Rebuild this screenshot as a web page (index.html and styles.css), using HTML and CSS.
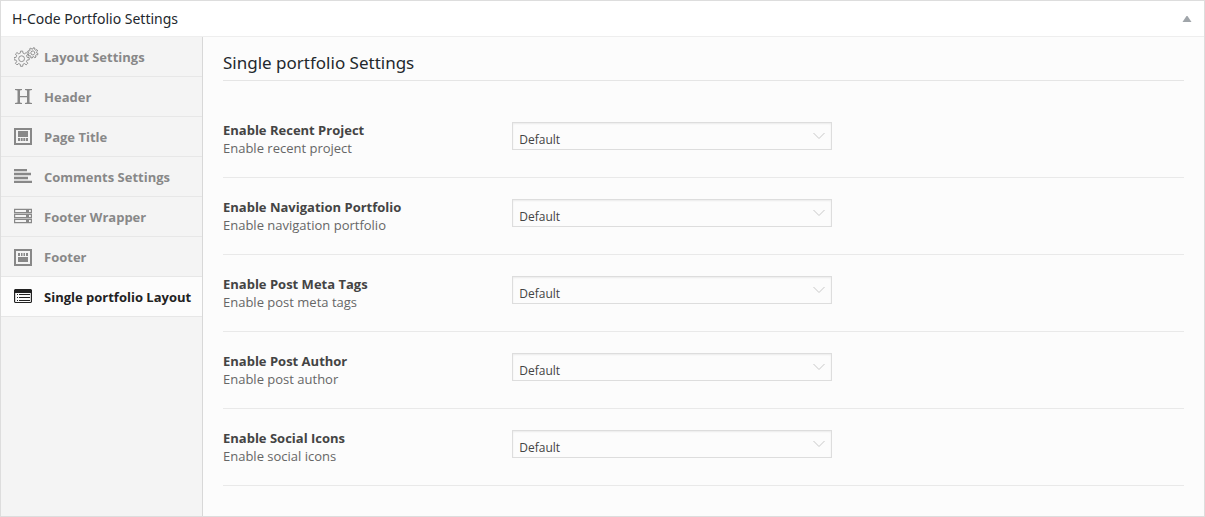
FILE: index.html
```html
<!DOCTYPE html>
<html lang="en">
<head>
<meta charset="utf-8">
<title>H-Code Portfolio Settings</title>
<link rel="stylesheet" href="styles.css">
</head>
<body>
<section class="metabox">
  <header class="metabox-header">
    <h2 class="metabox-title">H-Code Portfolio Settings</h2>
    <button class="toggle" type="button" aria-label="Toggle panel"><svg width="10" height="6" viewBox="0 0 10 6"><path d="M4.500 0H5.500L9.500 6H.5Z" fill="currentColor"/></svg></button>
  </header>
  <div class="metabox-body">
    <nav class="tabs">
      <a class="tab" href="#layout"><svg class="icon" viewBox="0 0 25 20" fill="none" stroke="currentColor">
        <defs>
          <path id="tooth" d="M5.200-2.150L5.500-1.400L7.600-1.100V1.100L5.500 1.400L5.200 2.150"/>
          <g id="gear"><use href="#tooth"/><use href="#tooth" transform="rotate(45)"/><use href="#tooth" transform="rotate(90)"/><use href="#tooth" transform="rotate(135)"/><use href="#tooth" transform="rotate(180)"/><use href="#tooth" transform="rotate(225)"/><use href="#tooth" transform="rotate(270)"/><use href="#tooth" transform="rotate(315)"/><circle r="2.900"/></g>
        </defs>
        <use href="#gear" transform="translate(7.600 11.700)" stroke-width=".9"/>
        <use href="#gear" transform="translate(18.800 5.900) rotate(15) scale(.68)" stroke-width="1.300"/></svg><span>Layout Settings</span></a>
      <a class="tab" href="#header"><svg class="icon" viewBox="0 0 25 20" fill="currentColor"><path d="M1 2H8V3L6 3.500V9H13V3.500L11 3V2H18V3L15.500 3.500V15.500L18 16V17H11V16L13 15.500V10.200H6V15.500L8 16V17H1V16L3.500 15.500V3.500L1 3Z"/></svg><span>Header</span></a>
      <a class="tab" href="#page-title"><svg class="icon" viewBox="0 0 25 20" fill="currentColor"><path fill-rule="evenodd" d="M0 1H18V18H0ZM2 3V16H16V3Z"/><path d="M4 4H14V10H4ZM4 11H6V14H4ZM6.700 11H8.700V14H6.700ZM9.300 11H11.300V14H9.300ZM12 11H14V14H12Z"/></svg><span>Page Title</span></a>
      <a class="tab" href="#comments"><svg class="icon" viewBox="0 0 25 20" fill="currentColor"><path d="M0 2H13V4.300H0ZM0 5.800H17V8.200H0ZM0 9.800H14V12.200H0ZM0 13.700H18V16H0Z"/></svg><span>Comments Settings</span></a>
      <a class="tab" href="#footer-wrapper"><svg class="icon" viewBox="0 0 25 20" fill="currentColor"><path fill-rule="evenodd" d="M0 1.800H18V6.200H0ZM1.200 3V5H12V3ZM15 3V5H16.800V3ZM0 6.800H18V11.200H0ZM1.200 8V10H12V8ZM15 8V10H16.800V8ZM0 11.800H18V16.200H0ZM1.200 13V15H12V13ZM15 13V15H16.800V13Z"/></svg><span>Footer Wrapper</span></a>
      <a class="tab" href="#footer"><svg class="icon" viewBox="0 0 25 20" fill="currentColor"><path fill-rule="evenodd" d="M0 2H18V19H0ZM2 4V17H16V4Z"/><path d="M4 6H6V9H4ZM7 6H8.500V9H7ZM9.500 6H11V9H9.500ZM12 6H14V9H12ZM4 10H14V15H4Z"/></svg><span>Footer</span></a>
      <a class="tab tab-active" href="#single" aria-current="page"><svg class="icon" viewBox="0 0 25 20" fill="currentColor"><path fill-rule="evenodd" d="M1 2H17L18 3V15L17 16H1L0 15V3ZM1.200 6V15H16.800V6Z"/><path d="M3 7H4V8H3ZM5 7H16V8H5ZM3 10H4V11H3ZM5 10H16V11H5ZM3 13H4V14H3ZM5 13H16V14H5Z"/></svg><span>Single portfolio Layout</span></a>
    </nav>
    <form class="panel">
      <h3 class="panel-title">Single portfolio Settings</h3>
      <div class="field">
        <label class="field-label" for="recent"><strong>Enable Recent Project</strong><span>Enable recent project</span></label>
        <div class="select-wrap"><select id="recent"><option>Default</option></select><svg class="chevron" viewBox="0 0 12 8"><path d="M.5 1L6 6.500L11.500 1"/></svg></div>
      </div>
      <div class="field">
        <label class="field-label" for="navigation"><strong>Enable Navigation Portfolio</strong><span>Enable navigation portfolio</span></label>
        <div class="select-wrap"><select id="navigation"><option>Default</option></select><svg class="chevron" viewBox="0 0 12 8"><path d="M.5 1L6 6.500L11.500 1"/></svg></div>
      </div>
      <div class="field">
        <label class="field-label" for="meta"><strong>Enable Post Meta Tags</strong><span>Enable post meta tags</span></label>
        <div class="select-wrap"><select id="meta"><option>Default</option></select><svg class="chevron" viewBox="0 0 12 8"><path d="M.5 1L6 6.500L11.500 1"/></svg></div>
      </div>
      <div class="field">
        <label class="field-label" for="author"><strong>Enable Post Author</strong><span>Enable post author</span></label>
        <div class="select-wrap"><select id="author"><option>Default</option></select><svg class="chevron" viewBox="0 0 12 8"><path d="M.5 1L6 6.500L11.500 1"/></svg></div>
      </div>
      <div class="field">
        <label class="field-label" for="social"><strong>Enable Social Icons</strong><span>Enable social icons</span></label>
        <div class="select-wrap"><select id="social"><option>Default</option></select><svg class="chevron" viewBox="0 0 12 8"><path d="M.5 1L6 6.500L11.500 1"/></svg></div>
      </div>
    </form>
  </div>
</section>
</body>
</html>
```
FILE: styles.css
```css
* { box-sizing: border-box; }

body {
  margin: 0;
  font: 13px/18px "Open Sans", sans-serif;
  color: #666;
}

.metabox {
  display: flex;
  flex-direction: column;
  min-height: 100vh;
  border: 1px solid #ddd;
  background: #fcfcfc;
}

.metabox-header {
  display: flex;
  align-items: center;
  justify-content: space-between;
  padding: 8px 12px 7px 11px;
  border-bottom: 1px solid #eee;
  background: #fff;
}

.metabox-title {
  margin: 0;
  font-family: "Noto Sans", "Open Sans", sans-serif;
  font-size: 14px;
  line-height: 20px;
  font-weight: 400;
  color: #23282d;
}

.toggle {
  display: flex;
  padding: 0;
  border: 0;
  background: none;
  color: #a0a5aa;
}

.metabox-body {
  display: flex;
  flex: 1;
}

.tabs {
  flex: none;
  width: 202px;
  border-right: 1px solid #d8d8d8;
  background: #f4f4f4;
}

.tab {
  display: flex;
  align-items: center;
  gap: 5px;
  height: 40px;
  padding-left: 13px;
  border-bottom: 1px solid #e7e7e7;
  color: #888;
  font-weight: 700;
  text-decoration: none;
  white-space: nowrap;
}

.tab-active {
  background: #fcfcfc;
  color: #222;
}

.icon {
  flex: none;
  width: 25px;
  height: 20px;
}

.panel {
  flex: 1;
  padding: 12px 20px 30px;
}

.panel-title {
  margin: 0 0 20px;
  padding: 2px 0 5px;
  border-bottom: 1px solid #e5e5e5;
  font-family: "Noto Sans", "Open Sans", sans-serif;
  font-size: 17px;
  line-height: 24px;
  font-weight: 400;
  color: #23282d;
}

.field {
  display: flex;
  gap: 1px;
  padding: 20px 0;
  border-bottom: 1px solid #e9e9e9;
}

.field-label {
  display: flex;
  flex-direction: column;
  width: 30%;
}

.field-label strong {
  font-weight: 700;
  color: #444;
}

.select-wrap {
  position: relative;
  width: 320px;
  padding-top: 1px;
}

.select-wrap select {
  display: block;
  width: 100%;
  height: 28px;
  padding: 7px 6px 0;
  border: 1px solid #ddd;
  border-radius: 0;
  appearance: none;
  background: #fcfcfc;
  box-shadow: inset 0 1px 2px rgba(0, 0, 0, .07);
  font: 12px/18px "Open Sans", sans-serif;
  color: #444;
}

.chevron {
  position: absolute;
  top: 11px;
  right: 7px;
  width: 12px;
  height: 8px;
  fill: none;
  stroke: #c8c8c8;
  pointer-events: none;
}
```
